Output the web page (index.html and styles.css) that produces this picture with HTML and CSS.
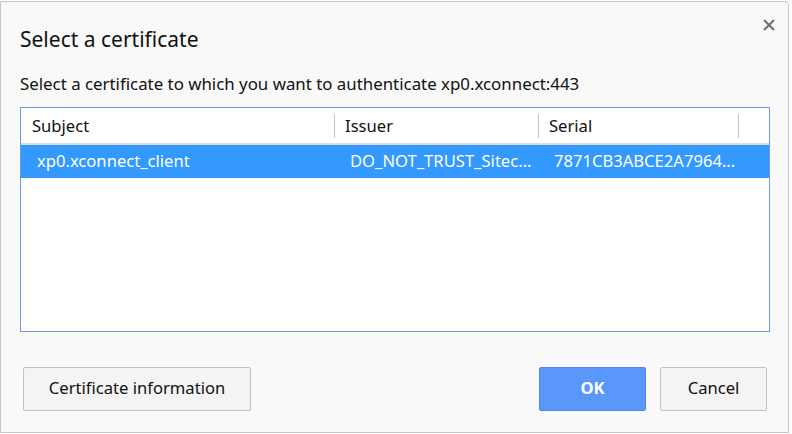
FILE: index.html
```html
<!DOCTYPE html>
<html>
<head>
<meta charset="utf-8">
<link rel="stylesheet" href="styles.css">
</head>
<body>
<div class="dialog">
  <div class="head">
    <h1 class="title">Select a certificate</h1>
    <button class="close" aria-label="Close">
      <svg width="12" height="12" viewBox="0 0 12 12"><path d="M1 1L11 11M11 1L1 11" stroke="#6e6e6e" stroke-width="2" fill="none"/></svg>
    </button>
  </div>
  <p class="subtitle">Select a certificate to which you want to authenticate xp0.xconnect:443</p>
  <div class="table">
    <div class="thead">
      <div class="th">Subject</div>
      <div class="th">Issuer</div>
      <div class="th">Serial</div>
      <div class="th last"></div>
    </div>
    <div class="row selected">
      <div class="td">xp0.xconnect_client</div>
      <div class="td">DO_NOT_TRUST_Sitec...</div>
      <div class="td">7871CB3ABCE2A7964...</div>
      <div class="td"></div>
    </div>
  </div>
  <div class="actions">
    <button class="btn">Certificate information</button>
    <div class="spacer"></div>
    <button class="btn primary">OK</button>
    <button class="btn">Cancel</button>
  </div>
</div>
</body>
</html>
```

FILE: styles.css
```css
html, body {
  margin: 0;
  padding: 0;
  background: #ffffff;
}
body {
  width: 792px;
  height: 434px;
  overflow: hidden;
  font-family: "Noto Sans", "Open Sans", sans-serif;
  color: #000;
}
.dialog {
  box-sizing: border-box;
  margin-top: 1px;
  width: 789px;
  height: 432px;
  border: 1px solid #c6c6c6;
  border-top-right-radius: 4px;
  background: #f9f9f9;
  display: flex;
  flex-direction: column;
  padding: 0 19px 0 19px;
}
.head {
  display: flex;
  justify-content: space-between;
  align-items: flex-start;
  height: 58px;
}
.title {
  margin: 22px 0 0 0;
  font-size: 21px;
  font-weight: normal;
  line-height: 30px;
  color: #111;
}
.close {
  margin: 16px -7px 0 0;
  padding: 0;
  width: 14px;
  height: 14px;
  border: none;
  background: none;
  display: flex;
  align-items: center;
  justify-content: center;
}
.subtitle {
  margin: 12px 0 0 0;
  font-size: 16.85px;
  line-height: 24px;
  color: #111;
}
.table {
  margin-top: 11px;
  box-sizing: border-box;
  width: 750px;
  height: 225px;
  border: 1px solid #6a9cec;
  background: #fff;
}
.thead, .row {
  display: grid;
  grid-template-columns: 313px 204px 200px 1fr;
}
.thead {
  box-sizing: border-box;
  height: 37px;
  border-bottom: 2px solid #dcdcdc;
}
.th {
  font-size: 16.6px;
  line-height: 35px;
  padding-left: 11px;
  position: relative;
  color: #111;
}
.th::after {
  content: "";
  position: absolute;
  right: -1px;
  top: 6px;
  height: 24px;
  width: 1px;
  background: #c4c4c4;
}
.th.last::after { display: none; }
.row {
  height: 33px;
}
.selected {
  background: #3399ff;
  color: #fff;
}
.td {
  font-size: 16.6px;
  line-height: 32px;
  padding-left: 16px;
  white-space: nowrap;
  overflow: hidden;
}
.actions {
  margin-top: 35px;
  display: flex;
  padding: 0 2px 0 3px;
  gap: 14px;
}
.spacer { flex: 1; }
.btn {
  box-sizing: border-box;
  height: 44px;
  min-width: 107px;
  padding: 0 20px 3px;
  border: 1px solid #c2c2c2;
  border-radius: 2px;
  background: #f4f4f4;
  font-family: "Noto Sans", "Open Sans", sans-serif;
  font-size: 16.6px;
  color: #111;
}
.btn.primary {
  background: #5a97fa;
  border-color: #4d88e8;
  color: #fff;
  font-weight: bold;
}
.actions .btn:first-child { width: 228px; }
```
